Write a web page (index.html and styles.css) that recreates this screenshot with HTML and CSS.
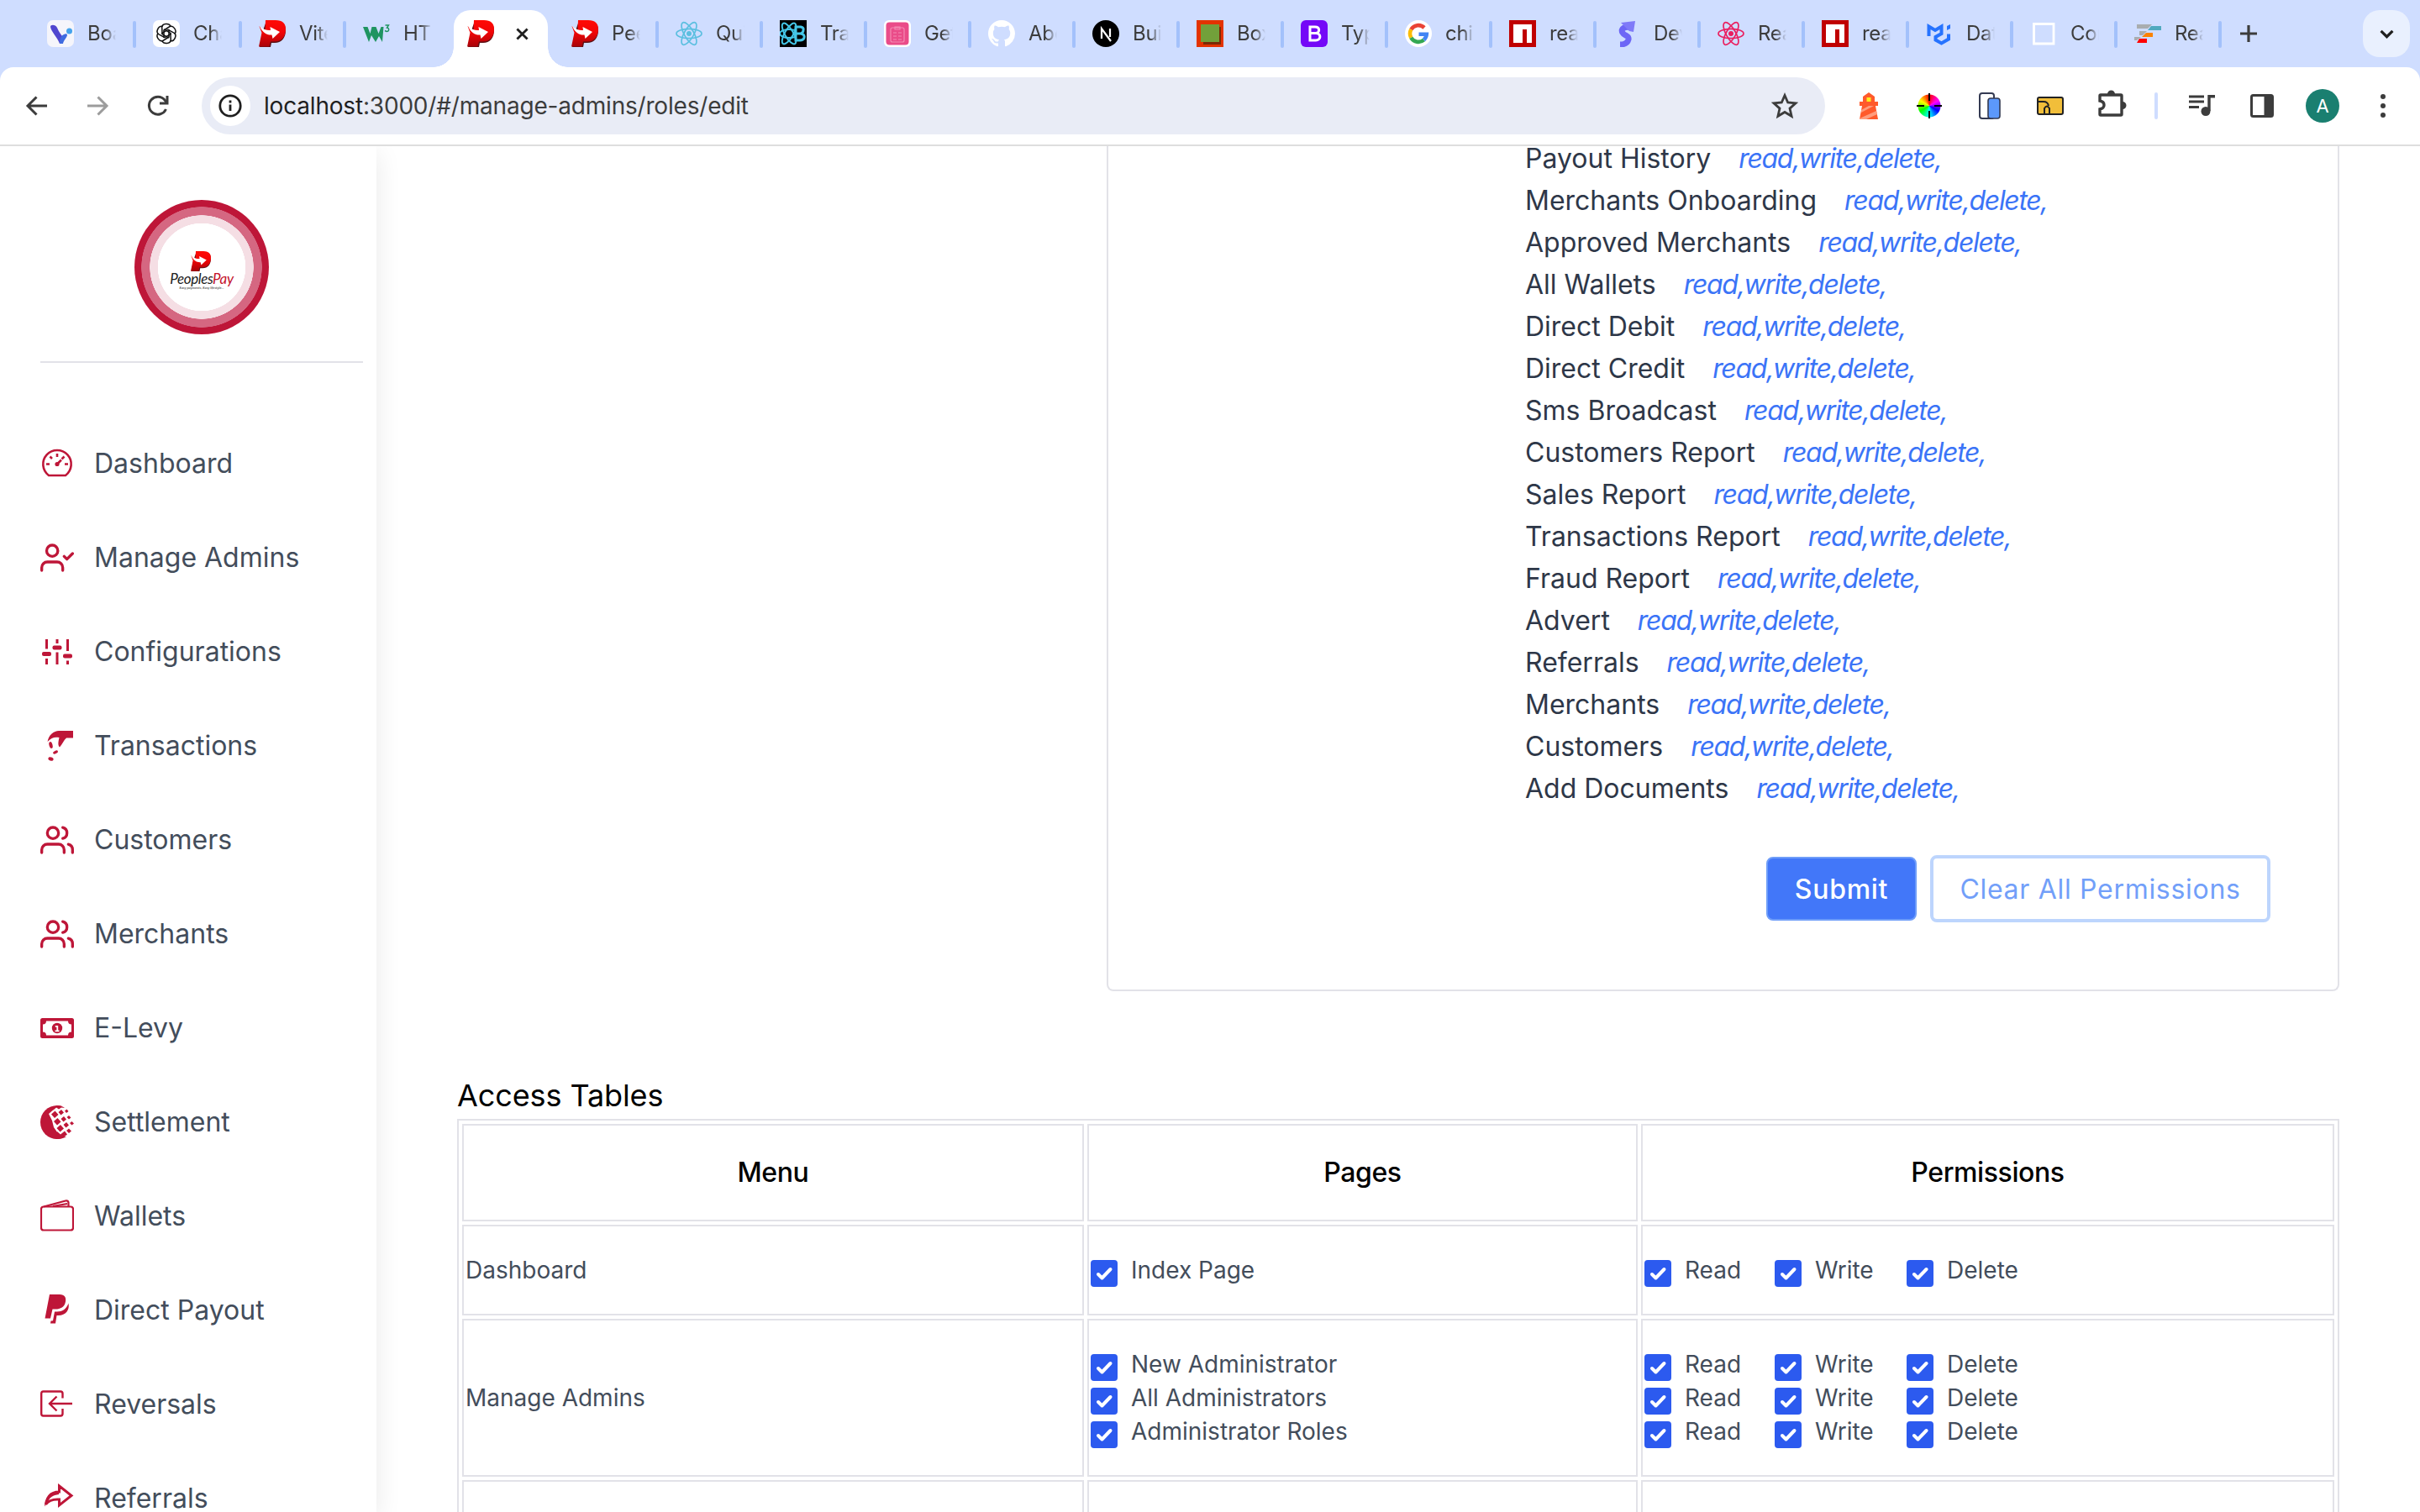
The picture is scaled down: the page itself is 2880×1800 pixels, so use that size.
FILE: index.html
```html
<!DOCTYPE html>
<html lang="en">
<head>
<meta charset="utf-8">
<title>PeoplesPay</title>
<link rel="stylesheet" href="styles.css">
</head>
<body>
<svg class="defs" aria-hidden="true">
  <defs>
    <linearGradient id="red" x1="0" y1="0" x2="0" y2="1"><stop offset="0" stop-color="#ff0a05"/><stop offset=".45" stop-color="#f20507"/><stop offset="1" stop-color="#a80309"/></linearGradient>
    <symbol id="p-logo" viewBox="0 0 32 32">
      <path fill="#5a1014" d="M9 1h12c7 0 11 4 11 11 0 9-5 15-13 15h-4l-1 5H1l3-17z"/>
      <path fill="url(#red)" d="M8 0h12c8 0 12 4 12 10.500 0 9-5 15-13 15h-5l-1.500 6H0l3.500-16.500L.500 7l7 5.500z"/>
      <path fill="#fff" d="M1 7c5 4.500 9 5.500 13 5L13.500 8l11.500 6-8.500 8-1-4.500C10 18 4 15 1 7z"/>
    </symbol>
    <symbol id="atom" viewBox="0 0 32 32">
      <g fill="none" stroke="currentColor" stroke-width="1.700"><ellipse cx="16" cy="16" rx="15" ry="5.600"/><ellipse cx="16" cy="16" rx="15" ry="5.600" transform="rotate(60 16 16)"/><ellipse cx="16" cy="16" rx="15" ry="5.600" transform="rotate(120 16 16)"/></g>
      <circle cx="16" cy="16" r="3" fill="currentColor"/>
    </symbol>
    <symbol id="npm" viewBox="0 0 32 32"><path fill="#c00000" d="M0 0h32v32H0z"/><path fill="#fff" d="M5 5h22v22h-6V11h-5v16H5z"/></symbol>
    <symbol id="users" viewBox="0 0 24 24"><g fill="none" stroke="currentColor" stroke-width="2" stroke-linecap="round" stroke-linejoin="round"><path d="M17 21v-2a4 4 0 0 0-4-4H5a4 4 0 0 0-4 4v2"/><circle cx="9" cy="7" r="4"/><path d="M23 21v-2a4 4 0 0 0-3-3.870M16 3.130a4 4 0 0 1 0 7.750"/></g></symbol>
    <symbol id="check" viewBox="0 0 32 32"><rect width="32" height="32" rx="4" fill="#2c5aef"/><path d="M9 17l4.500 4.500L23.500 11" fill="none" stroke="#fff" stroke-width="4" stroke-linecap="round" stroke-linejoin="round"/></symbol>
  </defs>
</svg>

<header class="browser">
  <div class="tabstrip">
    <div class="tab first">
      <svg viewBox="0 0 32 32"><rect width="32" height="32" rx="7" fill="#f5f5fb"/><path fill="#5046cf" d="M4 8c0-3 6-3 8 1 2 5 4 7 6 10l1 9h-4C12 20 5 14 4 8z"/><path fill="#3f6be0" d="M15 28c0-5 1-9 5-11 2-1 4-1 4 1-1 4-4 5-5 10z"/><circle cx="26.500" cy="13" r="3.500" fill="#45a3ec"/></svg>
      <span class="name">Boa</span><i></i>
    </div>
    <div class="tab second">
      <svg viewBox="0 0 32 32"><rect width="32" height="32" rx="7" fill="#fff"/><g fill="none" stroke="#111" stroke-width="1.500"><path id="kn" d="M11 8c0-4 8-5 10-1l-8 5v9"/><use href="#kn" transform="rotate(60 16 16)"/><use href="#kn" transform="rotate(120 16 16)"/><use href="#kn" transform="rotate(180 16 16)"/><use href="#kn" transform="rotate(240 16 16)"/><use href="#kn" transform="rotate(300 16 16)"/></g></svg>
      <span class="name">Cha</span><i></i>
    </div>
    <div class="tab"><svg><use href="#p-logo"/></svg><span class="name">Vite</span><i></i></div>
    <div class="tab last">
      <svg viewBox="0 0 32 32"><path fill="#1f9461" d="M0 8h5.500l3 8 2-8h5l3 8 3-8h3l-1.500 18-4-7-4 7-5-8-3 8z"/><path d="M26.500 6h4l-2 3c3 0 3 4.500-.5 4.500l-2-1" fill="none" stroke="#1f9461" stroke-width="1.400"/></svg>
      <span class="name">HTM</span>
    </div>
    <div class="tab active">
      <svg><use href="#p-logo"/></svg>
      <svg class="close" viewBox="0 0 16 16"><path d="M1.500 1.500l13 13m0-13l-13 13" stroke="#1f1f1f" stroke-width="3"/></svg>
    </div>
    <div class="tab after"><svg><use href="#p-logo"/></svg><span class="name">Pee</span><i></i></div>
    <div class="tab cyan"><svg><use href="#atom"/></svg><span class="name">Qui</span><i></i></div>
    <div class="tab"><svg viewBox="0 0 32 32"><path d="M0 0h32v32H0z"/><g fill="none" stroke="#45c7e8" stroke-width="2"><ellipse cx="11" cy="16" rx="11" ry="5"/><ellipse cx="11" cy="16" rx="14" ry="5" transform="rotate(60 11 16)"/><ellipse cx="11" cy="16" rx="14" ry="5" transform="rotate(120 11 16)"/></g><path d="M19 8h6q4 1 3 4 0 3-3 4 5 1 4 5-1 3-5 3h-5zm0 8h6" fill="#000" stroke="#45c7e8" stroke-width="3"/></svg><span class="name">Trai</span><i></i></div>
    <div class="tab"><svg viewBox="0 0 32 32"><rect width="32" height="32" rx="6" fill="#fff"/><rect x="2.500" y="2.500" width="27" height="27" rx="4" fill="#ea4c89"/><path d="M10 9h12q2 0 2 2v13q0 2-2 2H10q-2 0-2-2V11q0-2 2-2zm3 2h6V8h-6zm-2 4h4m2 0h4m-10 4h4m2 0h4m-10 4h4m2 0h4" fill="none" stroke="#f48ab3" stroke-width="1.200"/></svg><span class="name">Get</span><i></i></div>
    <div class="tab"><svg viewBox="0 0 16 16"><path fill="#fff" d="M8 0C3.580 0 0 3.580 0 8c0 3.540 2.290 6.530 5.470 7.590.4.070.55-.17.55-.38 0-.19-.01-.82-.01-1.490-2.010.37-2.530-.49-2.690-.94-.09-.23-.48-.94-.82-1.130-.28-.15-.68-.52-.01-.53.63-.01 1.080.58 1.230.82.72 1.210 1.870.87 2.330.66.07-.52.28-.87.51-1.070-1.780-.2-3.640-.89-3.640-3.950 0-.87.31-1.590.82-2.150-.08-.2-.36-1.020.08-2.120 0 0 .67-.21 2.200.82a7.600 7.600 0 0 1 4 0c1.530-1.040 2.200-.82 2.200-.82.44 1.100.16 1.920.08 2.120.51.56.82 1.270.82 2.150 0 3.070-1.870 3.750-3.650 3.950.29.25.54.73.54 1.480 0 1.070-.01 1.930-.01 2.200 0 .21.15.46.55.38A8 8 0 0 0 16 8c0-4.420-3.580-8-8-8z"/></svg><span class="name">Abo</span><i></i></div>
    <div class="tab"><svg viewBox="0 0 32 32"><circle cx="16" cy="16" r="16"/><path d="M11 22V10l11 15M21 10v10" fill="none" stroke="#fff" stroke-width="2.200"/></svg><span class="name">Buil</span><i></i></div>
    <div class="tab"><svg viewBox="0 0 32 32"><path fill="#e33300" d="M0 0h32v32H0z"/><path fill="#7a2a05" d="M8 8h21v21H8z"/><path fill="#72a03a" d="M5 5h22v21H5z"/></svg><span class="name">Box</span><i></i></div>
    <div class="tab"><svg viewBox="0 0 32 32"><rect width="32" height="32" rx="6" fill="#7408f7"/><path d="M11 8h6c6 0 6 7 1 7.500h-7 7c7 .5 6 8.500 0 8.500h-7z" fill="none" stroke="#fff" stroke-width="3"/></svg><span class="name">Typ</span><i></i></div>
    <div class="tab"><svg viewBox="0 0 32 32"><circle cx="16" cy="16" r="16" fill="#fff"/><g fill="none" stroke-width="4.600"><path stroke="#ea4335" d="M23 9a10 10 0 0 0-15.700 2.200"/><path stroke="#fbbc05" d="M7.300 11.200a10 10 0 0 0 0 9.600"/><path stroke="#34a853" d="M7.300 20.800A10 10 0 0 0 22.500 23.500"/><path stroke="#4285f4" d="M22.500 23.500a10 10 0 0 0 3.300-6.800H16.500"/></g></svg><span class="name">chi</span><i></i></div>
    <div class="tab"><svg><use href="#npm"/></svg><span class="name">reac</span><i></i></div>
    <div class="tab"><svg viewBox="0 0 32 32"><path d="M21 9c-7-2-13 1-10 6 2 4 8 3 7 8-1 4-4 6-10 6" fill="none" stroke="#6d66f6" stroke-width="7"/><path fill="#7f7af8" d="M9 3l17-2-2 13-5-1z"/></svg><span class="name">Dev</span><i></i></div>
    <div class="tab pink"><svg><use href="#atom"/></svg><span class="name">Rea</span><i></i></div>
    <div class="tab"><svg><use href="#npm"/></svg><span class="name">reac</span><i></i></div>
    <div class="tab"><svg viewBox="0 0 32 32"><path d="M3.500 19V7.500L11 12l7.500-4.500v8.500l-7 4v3.500l7 4 8.500-5v-6" fill="none" stroke="#2673ff" stroke-width="4"/><path fill="#2673ff" d="M25 7l4-2v5l-4 2z"/></svg><span class="name">Dat</span><i></i></div>
    <div class="tab"><svg viewBox="0 0 32 32"><path d="M4.500 4.500h23.500v23.500H4.500z" fill="none" stroke="#fff" stroke-width="2.800"/></svg><span class="name">Con</span><i></i></div>
    <div class="tab"><svg viewBox="0 0 32 32"><path fill="#a9adaf" d="M3 5h18l-5 5H3zM6 13h9l-5 5H6zM0 20h8l-5 4H0z"/><path fill="#51a9be" d="M20 7h12v5H16z"/><path fill="#fb8200" d="M14 15h8v5H9z"/><path fill="#f00" d="M6 22h9v5H3z"/></svg><span class="name">Rea</span><i></i></div>
    <svg class="plus" viewBox="0 0 20 20"><path d="M10 0v20M0 10h20" stroke="#3c3c3c" stroke-width="3.200"/></svg>
    <div class="tabsearch"><svg viewBox="0 0 16 10"><path d="M1.500 1.500L8 8l6.500-6.500" fill="none" stroke="#1f1f1f" stroke-width="3"/></svg></div>
  </div>

  <div class="toolbar">
    <div class="nav">
      <svg viewBox="0 0 32 32"><path d="M28 16H6M15.500 5.500L5 16l10.500 10.500" fill="none" stroke="#3c3c3c" stroke-width="3"/></svg>
      <svg viewBox="0 0 32 32"><path d="M4 16h22M16.500 5.500L27 16 16.500 26.500" fill="none" stroke="#9c9c9c" stroke-width="3"/></svg>
      <svg viewBox="0 0 32 32"><path d="M25.500 20A10.500 10.500 0 1 1 24 9l2 3" fill="none" stroke="#3c3c3c" stroke-width="3"/><path d="M27 4v9h-9" fill="none" stroke="#3c3c3c" stroke-width="3"/></svg>
    </div>
    <div class="omnibox">
      <span class="info"><svg viewBox="0 0 28 28"><circle cx="14" cy="14" r="12.200" fill="none" stroke="#1f1f1f" stroke-width="2.800"/><path d="M14 12.500V20M14 7.500v3" stroke="#1f1f1f" stroke-width="2.800"/></svg></span>
      <span class="url"><b>localhost</b>:3000/#/manage-admins/roles/edit</span>
      <svg class="star" viewBox="0 0 32 32"><path d="M16 3.500l3.700 8.500 9.300.900-7 6.200 2.100 9.200L16 23.500l-8.100 4.800L10 19.100l-7-6.200 9.300-.900z" fill="none" stroke="#3c3c3c" stroke-width="2.800"/></svg>
    </div>
    <div class="extensions">
      <svg viewBox="0 0 32 32"><path fill="#ff5a2b" d="M9 5l7-5 7 5v6h4v5h-3l3 16H5l3-16H5v-5h4z"/><path fill="#ffeb1f" d="M13.500 6h5v5h-5z"/><path fill="#ff9c7d" d="M7 21l9-5h6L7 24zM5 31l20-9 1 4-13 6H5z"/></svg>
      <span class="wheel"></span>
      <svg viewBox="0 0 32 32"><rect x="4" y="1" width="17" height="30" rx="3" fill="#fff" stroke="#343a52" stroke-width="2"/><rect x="14" y="7" width="14" height="24" rx="3" fill="#5c98fb" stroke="#343a52" stroke-width="1.600"/></svg>
      <svg viewBox="0 0 32 32"><rect x="1" y="6" width="30" height="20" rx="2" fill="#f1be3a" stroke="#222" stroke-width="2"/><path d="M1 11h7q5 0 6 5M9 26v-7q3-5 6 0v7" fill="none" stroke="#222" stroke-width="2"/></svg>
      <svg class="puzzle" viewBox="0 0 36 36"><path d="M5 7h24q1 0 1 1v22q0 1-1 1H5q-1 0-1-1v-6q5-1 5-5t-5-5V8q0-1 1-1z" fill="none" stroke="#3c3c3c" stroke-width="3.400"/><path fill="#3c3c3c" d="M13 6a4.500 4.500 0 0 1 9 0zM31 15a4.500 4.500 0 0 1 0 9z"/></svg>
    </div>
    <i class="split"></i>
    <div class="tools">
      <svg viewBox="0 0 32 32"><path d="M1 5h18M1 11h18M1 17.500h12" stroke="#3c3c3c" stroke-width="3"/><path d="M32 4.700h-7V22" fill="none" stroke="#3c3c3c" stroke-width="3.400"/><circle cx="21" cy="22.500" r="5.500" fill="#3c3c3c"/></svg>
      <svg viewBox="0 0 32 32"><rect x="3.500" y="3.500" width="25" height="25" rx="2" fill="#fff" stroke="#3c3c3c" stroke-width="3"/><path fill="#3c3c3c" d="M18.500 3h10v26h-10z"/></svg>
      <span class="avatar">A</span>
      <svg viewBox="0 0 32 32" fill="#3c3c3c"><circle cx="16" cy="5" r="3"/><circle cx="16" cy="16" r="3"/><circle cx="16" cy="27" r="3"/></svg>
    </div>
  </div>
</header>

<div class="page">
  <aside class="sidebar">
    <div class="brand">
      <div class="ring">
        <svg><use href="#p-logo"/></svg>
        <div class="brandname">Peoples<b>Pay</b></div>
        <div class="tagline">Easy payments, Easy lifestyle...</div>
      </div>
    </div>
    <nav class="menu">
      <a><svg viewBox="0 0 40 40" fill="none" stroke="currentColor" stroke-width="2.600"><path d="M10 34A16.700 16.700 0 1 1 30 34z" stroke-linejoin="round"/><path d="M20 8v4M11.500 11.500l2.500 2.500M7 20.500h4M29 20.500h4M28.500 11.500l-3 3M20 20.500l5-5" /><circle cx="20" cy="20.500" r="1.300"/></svg>Dashboard</a>
      <a><svg viewBox="0 0 24 24" fill="none" stroke="currentColor" stroke-width="2" stroke-linecap="round" stroke-linejoin="round"><path d="M16 21v-2a4 4 0 0 0-4-4H5a4 4 0 0 0-4 4v2"/><circle cx="8.500" cy="7" r="4"/><path d="M17 11l2 2 4-4"/></svg>Manage Admins</a>
      <a><svg viewBox="0 0 40 40"><path d="M7.500 5v11.500M7.500 28v7M20 5v5M20 20.500V35M32.500 5v14M32.500 30.500V35" stroke="currentColor" stroke-width="3"/><g fill="currentColor"><rect x="2" y="20" width="11" height="5" rx="2"/><rect x="14.500" y="12.500" width="11" height="5" rx="2"/><rect x="27" y="22.500" width="11" height="5" rx="2"/></g></svg>Configurations</a>
      <a><svg viewBox="0 0 40 40" fill="currentColor"><path d="M39 2v8.500h-8C28 13 26 18 23 21.500c-2-2-2-5-.5-11.500C17 9 13 10 8.500 15 10 7 16 2 22 2z"/><ellipse cx="12.500" cy="19" rx="2" ry="4" transform="rotate(-15 12.500 19)"/><ellipse cx="18" cy="27.500" rx="3.200" ry="1.700" transform="rotate(-25 18 27.500)"/><ellipse cx="12.500" cy="35.500" rx="3.200" ry="2" transform="rotate(20 12.500 35.500)"/></svg>Transactions</a>
      <a><svg><use href="#users"/></svg>Customers</a>
      <a><svg><use href="#users"/></svg>Merchants</a>
      <a><svg viewBox="0 0 40 40"><path fill="currentColor" fill-rule="evenodd" d="M2.500 8h35Q40 8 40 10.500v19q0 2.500-2.500 2.500h-35Q0 32 0 29.500v-19Q0 8 2.500 8zM7 11.500q0 4-4 4v9q4 0 4 4h26q0-4 4-4v-9q-4 0-4-4z"/><circle cx="20" cy="20" r="6.200" fill="currentColor"/><path d="M17.800 17.800h2.500v5.200M17.500 23.300h5" fill="none" stroke="#fff" stroke-width="1.800"/></svg>E-Levy</a>
      <a><svg viewBox="0 0 40 40"><path fill="currentColor" d="M20 0c4 0 7 1 9 2.500L35 34C31 38 26 40 20 40A20 20 0 0 1 20 0z"/><path fill="#fff" d="M10 10L19 2l20-3 3 40-19-3-7-10-2-8z"/><g fill="currentColor"><path d="M13 10.500l4.500-4 4 4.500-4.500 4zM16 19l4.500-4 4 4.500-4.500 4zM19.500 27l4.500-4 4 4.500-4.500 4zM21.500 8l3.500-3 3 3.500-3.500 3zM24.500 16l3.500-3 3 3.500-3.500 3zM27.500 23l3.500-3 3 3.500-3.500 3zM29 6.500l2.500-2 2 2.500-2.500 2zM31.500 14l2.500-2 2.500 2.500-2.500 2zM35 21l2.500-2 2.500 2.500-2.500 2zM31 30l3-2.500 3 3-3 2.500z"/><path d="M19 0c4 0 8 1 10 3l-4-.5-3 2-3-2-5 4zM20 31l4 3.500 5-4 3 4C28 38 24 40 18 40z"/></g></svg>Settlement</a>
      <a><svg viewBox="0 0 40 40" fill="none" stroke="currentColor" stroke-width="2.200" stroke-linejoin="round"><rect x="1" y="8.500" width="38" height="28" rx="3"/><path d="M4 8.500L30 1.500q3-.5 3.500 2v5M15 8l17-3"/></svg>Wallets</a>
      <a><svg viewBox="0 0 40 40" fill="currentColor"><path d="M11 1h12c6 0 8 4 7 8.500C29 16 24 18.500 18 18.500h-3.500L12 29.500H5.500z"/><path d="M33.500 11.500c1.500 8-3 14.500-12 14.500h-2l-1.500 9.500h-6l.5-3 2.500-.2L17 21.500h3c6 0 11-3 13.500-10z"/></svg>Direct Payout</a>
      <a><svg viewBox="0 0 40 40" fill="none" stroke="currentColor" stroke-width="2.400"><path d="M26.500 12.500V7q0-2.500-2.500-2.500H3.500Q1.200 4.500 1.200 7v24q0 2.500 2.300 2.500H24q2.500 0 2.500-2.500v-6M38 19H11M19.500 10.500L11 19l8.500 8.500"/></svg>Reversals</a>
      <a><svg viewBox="0 0 40 40"><path d="M22.500 5L37 16.500 22.500 28v-7C15 20.500 10 22 6.500 27 8 17 13 12 22.500 12z" fill="none" stroke="currentColor" stroke-width="3"/><path fill="currentColor" d="M5 29.500C6 18 12 12 22 11v4C15 16 11 19 10 22z"/></svg>Referrals</a>
    </nav>
  </aside>

  <main class="content">
    <section class="card">
      <ul class="perms">
        <li>Payout History<em>read,write,delete,</em></li>
        <li>Merchants Onboarding<em>read,write,delete,</em></li>
        <li>Approved Merchants<em>read,write,delete,</em></li>
        <li>All Wallets<em>read,write,delete,</em></li>
        <li>Direct Debit<em>read,write,delete,</em></li>
        <li>Direct Credit<em>read,write,delete,</em></li>
        <li>Sms Broadcast<em>read,write,delete,</em></li>
        <li>Customers Report<em>read,write,delete,</em></li>
        <li>Sales Report<em>read,write,delete,</em></li>
        <li>Transactions Report<em>read,write,delete,</em></li>
        <li>Fraud Report<em>read,write,delete,</em></li>
        <li>Advert<em>read,write,delete,</em></li>
        <li>Referrals<em>read,write,delete,</em></li>
        <li>Merchants<em>read,write,delete,</em></li>
        <li>Customers<em>read,write,delete,</em></li>
        <li>Add Documents<em>read,write,delete,</em></li>
      </ul>
      <div class="actions">
        <button class="submit">Submit</button>
        <button class="clear">Clear All Permissions</button>
      </div>
    </section>

    <h2>Access Tables</h2>
    <div class="access">
      <div class="cell head">Menu</div><div class="cell head">Pages</div><div class="cell head">Permissions</div>

      <div class="cell">Dashboard</div>
      <div class="cell"><label><svg><use href="#check"/></svg>Index Page</label></div>
      <div class="cell">
        <div class="rwd"><label><svg><use href="#check"/></svg>Read</label><label><svg><use href="#check"/></svg>Write</label><label><svg><use href="#check"/></svg>Delete</label></div>
      </div>

      <div class="cell">Manage Admins</div>
      <div class="cell"><label><svg><use href="#check"/></svg>New Administrator</label><label><svg><use href="#check"/></svg>All Administrators</label><label><svg><use href="#check"/></svg>Administrator Roles</label></div>
      <div class="cell">
        <div class="rwd"><label><svg><use href="#check"/></svg>Read</label><label><svg><use href="#check"/></svg>Write</label><label><svg><use href="#check"/></svg>Delete</label></div>
        <div class="rwd"><label><svg><use href="#check"/></svg>Read</label><label><svg><use href="#check"/></svg>Write</label><label><svg><use href="#check"/></svg>Delete</label></div>
        <div class="rwd"><label><svg><use href="#check"/></svg>Read</label><label><svg><use href="#check"/></svg>Write</label><label><svg><use href="#check"/></svg>Delete</label></div>
      </div>

      <div class="cell"></div><div class="cell"></div><div class="cell"></div>
    </div>
  </main>
</div>
</body>
</html>
```
FILE: styles.css
```css
* { box-sizing: border-box; }
html, body { margin: 0; height: 100%; overflow: hidden; }
body {
  display: flex;
  flex-direction: column;
  height: 1800px;
  background: #fff;
  font-family: Inter, "Liberation Sans", sans-serif;
}
.defs { position: absolute; width: 0; height: 0; }
svg { display: block; flex: none; }

/* Browser frame */
.browser { flex: none; background: #cfddff; }
.tabstrip { display: flex; align-items: center; height: 80px; padding-left: 56px; }
.tab { display: flex; align-items: center; width: 124px; height: 32px; flex: none; color: #3c3c3c; font-size: 24px; }
.tab svg { width: 32px; height: 32px; }
.tab .name {
  width: 34px; margin: 0 18px 0 16px; overflow: hidden; white-space: nowrap; line-height: 32px; letter-spacing: -0.300px;
  -webkit-mask-image: linear-gradient(90deg, #000 60%, transparent);
  mask-image: linear-gradient(90deg, #000 60%, transparent);
}
.tab i { width: 4px; height: 32px; margin-top: 2px; border-radius: 2px; background: #a3c1fb; }
.tab.first, .tab.second { width: 126px; }
.tab.last { width: 108px; }
.tab.first .name, .tab.second .name { margin-right: 20px; }
.tab.cyan svg { color: #5bbfe0; }
.tab.pink svg { color: #ea1f5f; }
.tab.active {
  position: relative; align-self: flex-end; width: 112px; height: 68px; padding: 0 16px 12px; gap: 26px;
  background: #fff; border-radius: 20px 20px 0 0;
}
.tab.active::before, .tab.active::after {
  content: ""; position: absolute; bottom: 0; width: 24px; height: 24px; left: -24px;
  background: radial-gradient(circle at 0 0, transparent 23.500px, #fff 24px);
}
.tab.active::after { left: auto; right: -24px; background: radial-gradient(circle at 100% 0, transparent 23.500px, #fff 24px); }
.tab .close { width: 15px; height: 15px; }
.tab.after { margin-left: 28px; }
.plus { width: 20px; height: 20px; margin-left: 2px; }
.tabsearch {
  display: flex; align-items: center; justify-content: center; width: 56px; height: 56px;
  margin: 0 12px 0 auto; border-radius: 20px; background: #e9f0fe;
}
.tabsearch svg { width: 17px; height: 11px; }

.toolbar {
  display: flex; align-items: center; height: 94px; background: #fff; border-bottom: 2px solid #dedede;
  border-radius: 16px 16px 0 0;
}
.toolbar svg { width: 32px; height: 32px; }
.nav { display: flex; gap: 40px; width: 240px; padding-left: 28px; }
.omnibox { display: flex; align-items: center; width: 1932px; height: 68px; padding: 0 32px 0 10px; border-radius: 34px; background: #e9ecf6; }
.info { display: flex; align-items: center; justify-content: center; width: 48px; height: 48px; border-radius: 50%; background: #fff; }
.toolbar .info svg { width: 28px; height: 28px; }
.url { flex: 1; margin-left: 16px; font-size: 28px; letter-spacing: -0.190px; color: #3c3c3c; }
.url b { font-weight: 400; color: #1f1f1f; }
.extensions { display: flex; align-items: center; gap: 40px; margin-left: 36px; }
.toolbar .puzzle { width: 36px; height: 36px; margin: -4px -2px 0 -1px; }
.wheel {
  position: relative; width: 32px; height: 32px; border-radius: 50%;
  background:
    radial-gradient(circle, transparent 13px, #fff 14px),
    conic-gradient(#f00, #f0f, #00f, #0ff, #0f0, #ff0, #f00);
}
.wheel::before, .wheel::after { content: ""; position: absolute; left: 15px; top: 1px; width: 2px; height: 30px; background: linear-gradient(#000 9px, transparent 9px 21px, #000 21px); }
.wheel::after { transform: rotate(90deg); }
.split { width: 4px; height: 32px; margin-left: 35px; border-radius: 2px; background: #cfddff; }
.tools { display: flex; align-items: center; gap: 40px; margin-left: 36px; }
.avatar { width: 40px; height: 40px; margin: 0 -4px; border-radius: 50%; background: #1a7f70; color: #fff; font-size: 22px; line-height: 40px; text-align: center; }

/* App shell */
.page { display: flex; flex: 1; min-height: 0; overflow: hidden; }
.sidebar { flex: none; width: 448px; background: #fff; box-shadow: 0 8px 30px rgba(0, 0, 0, .09); padding: 64px 16px 0 48px; }
.brand { display: flex; justify-content: center; height: 194px; border-bottom: 2px solid #e2e2e8; }
.ring {
  display: flex; flex-direction: column; align-items: center; width: 160px; height: 160px; padding-top: 61px; border-radius: 50%;
  background: radial-gradient(circle, #fff 52px, #f5dee4 52.500px 61.500px, #d56781 62px 71.500px, #be1638 72px);
}
.ring svg { width: 24px; height: 24px; margin-right: 2px; }
.brandname { margin-top: 1px; font: italic 400 17px/16px Lato, sans-serif; letter-spacing: -0.400px; color: #222; white-space: nowrap; }
.brandname b { font-weight: 400; color: #c4122b; }
.tagline { font: italic 400 4.200px/5px Lato, sans-serif; color: #222; white-space: nowrap; }
.menu { display: flex; flex-direction: column; padding-top: 63px; }
.menu a { display: flex; align-items: center; flex: none; gap: 24px; height: 112px; font-size: 32px; color: #434d5b; }
.menu svg { width: 40px; height: 40px; margin-top: 2px; color: #be1638; }
.content { flex: 1; padding: 0 96px; }

/* Role card */
.card { width: 1467px; height: 1018px; margin: -12px 0 0 773px; padding: 2px 80px 0 496px; border: 2px solid #e2e2e8; border-top: 0; border-radius: 0 0 8px 8px; }
.perms { margin: 0; padding: 0; list-style: none; font-size: 32px; line-height: 50px; color: #2e3748; }
.perms em { margin-left: 33px; color: #3b74f7; letter-spacing: -1.300px; }
.actions { display: flex; justify-content: flex-end; align-items: center; gap: 16px; margin-top: 54px; }
.actions button { font-family: inherit; font-size: 32px; letter-spacing: .700px; border-radius: 8px; padding: 0; }
.submit { width: 179px; height: 76px; border: 2px solid #6e9df9; background: #4277f9; color: #fff; font-weight: 500; }
.clear { width: 405px; height: 80px; border: 4px solid #bdd5fd; background: #fff; color: #729ff9; }

/* Access table */
h2 { margin: 96px 0 0; font-size: 36px; font-weight: 400; line-height: 56px; letter-spacing: -0.100px; color: #000; }
.access {
  display: grid; grid-template-columns: 740px 655px 825px; gap: 4px; width: 2240px;
  grid-template-rows: 116px 108px 188px 188px; padding: 4px; border: 2px solid #e2e2e8;
}
.cell { display: flex; flex-direction: column; justify-content: center; padding: 0 2px; border: 2px solid #e2e2e8; font-size: 28px; line-height: 40px; color: #434d5b; }
.head { align-items: center; font-size: 32px; font-weight: 500; letter-spacing: -0.400px; color: #000; }
.cell label { display: flex; gap: 16px; height: 40px; }
.cell label svg { width: 32px; height: 32px; margin-top: 8px; }
.rwd { display: grid; grid-template-columns: 155px 157px 150px; }
```
